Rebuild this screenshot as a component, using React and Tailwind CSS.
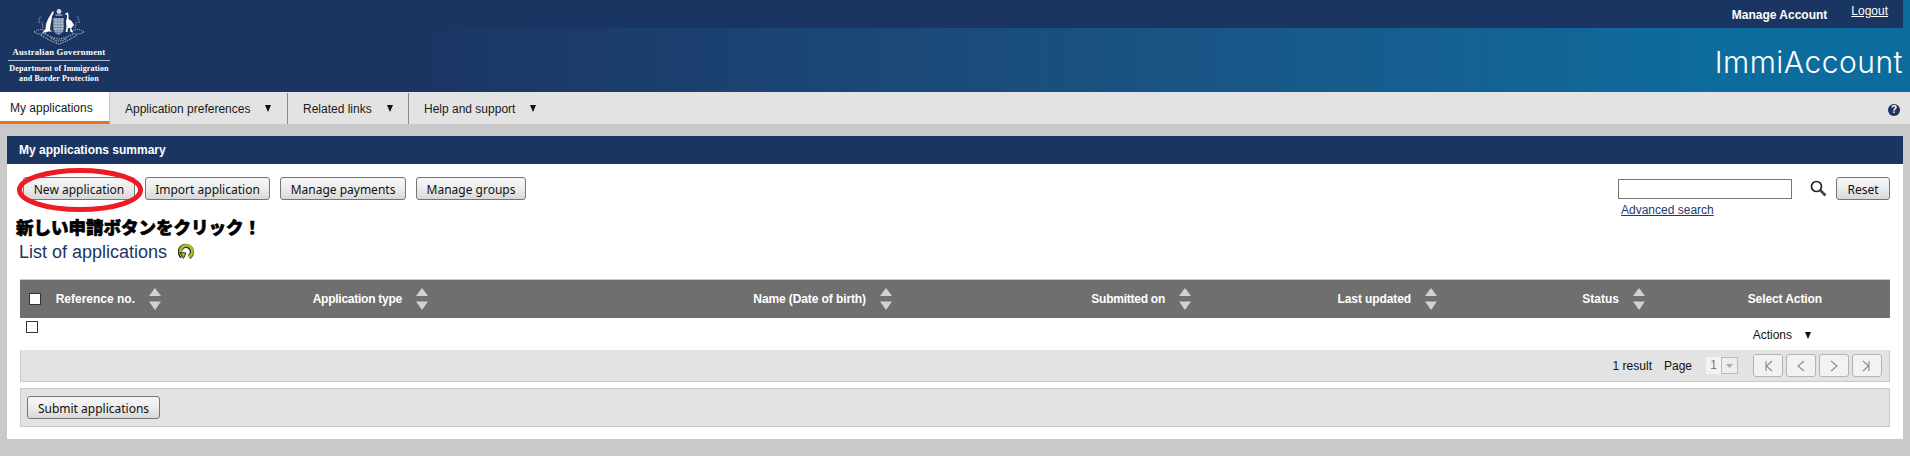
const sans = { fontFamily: '"Liberation Sans", Arial, sans-serif' }

function Emblem() {
  return (
    <svg width="52" height="37" viewBox="0 0 52 37" className="block" fill="none">
      {/* crest */}
      <circle cx="26" cy="3.5" r="2.4" fill="#fff" opacity="0.8" />
      <rect x="22.5" y="6.5" width="7" height="1.2" fill="#fff" opacity="0.6" />
      {/* kangaroo */}
      <path d="M19 4 L20.5 3 L20.5 6 L19 8 L18.5 12 L17.5 17 L17 22 L19.5 23.5 L16 23.5 L13.5 24 L9 25 L12.5 21 L13 16 L15.5 10 L17.5 7 Z" fill="#fff" />
      {/* emu */}
      <path d="M33 5 L35 4.5 L35.5 7 L35.5 11 L38.5 13 L41 17 L39 19.5 L38 20 L40 24 L37.5 24 L37 20 L35 20 L34.5 24 L32.5 24 L33.5 19 L33 13 L34 10 L34 7 L32 6.5 Z" fill="#fff" />
      {/* shield */}
      <path d="M20 10 H31 V20 Q31 25 25.5 27 Q20 25 20 20 Z" fill="#6e80a2" />
      <path d="M21 12 H30 M21 15 H30 M21 18 H30 M21 21 H30 M23 10 V25 M26 10 V26 M29 10 V24" stroke="#fff" strokeWidth="0.9" strokeDasharray="1.5 1" opacity="0.8" />
      {/* wattle */}
      <path d="M1 24 Q8 19 14 24 Q8 28 1 24 Z M51 24 Q44 19 38 24 Q44 28 51 24 Z" stroke="#fff" strokeWidth="1" strokeDasharray="1.2 1" opacity="0.7" />
      <path d="M6 15 Q6 10 8 8 M10 20 L9 14 M46 15 Q46 10 44 8 M42 20 L43 14" stroke="#fff" strokeWidth="1.2" strokeDasharray="1.5 0.8" opacity="0.45" />
      <path d="M8 27 Q17 33 26 36 Q35 33 44 27 M12 26 Q19 30 26 31 Q33 30 40 26 M18 30 Q22 33 26 33 Q30 33 34 30" stroke="#fff" strokeWidth="1.1" strokeDasharray="1.4 1" opacity="0.65" />
    </svg>
  )
}

function SiteHeader() {
  return (
    <header className="h-[92px] shrink-0 relative bg-linear-to-r from-[#1b3563] from-22% to-[#0d6c9e] to-90%">
      <div className="h-[28px] mr-[7px] bg-[#1b3563] flex justify-end text-white text-[12px]" style={sans}>
        <span className="font-bold mt-[6px] mr-[24px]">Manage Account</span>
        <a className="underline mt-[2px] mr-[15px]">Logout</a>
      </div>
      <div className="h-[64px] flex justify-end pr-[7px] pt-[16px]">
        <span className="text-white text-[30px] leading-[36px] font-light tracking-[0.5px]" style={{ fontFamily: 'Inter, sans-serif' }}>ImmiAccount</span>
      </div>
      {/* logo sits over the banner */}
      <div className="absolute left-0 top-0 w-[118px] h-[92px] flex flex-col items-center pt-[8px] text-white font-bold" style={{ fontFamily: '"Liberation Serif", serif' }}>
        <Emblem />
        <div className="text-[8.6px] leading-[11px] mt-[2px] tracking-[0.25px] whitespace-nowrap">Australian Government</div>
        <div className="w-[102px] h-px bg-[#a9b6cc] my-[2px]" />
        <div className="text-[8px] leading-[9.5px] mt-[1px] text-center tracking-[0.15px] whitespace-nowrap">
          Department of Immigration<br />and Border Protection
        </div>
      </div>
    </header>
  )
}

function Caret({ className = '' }) {
  return (
    <svg width="6" height="7" viewBox="0 0 6 7" className={className}>
      <path d="M0 0 H6 L3 7 Z" fill="#111" />
    </svg>
  )
}

function NavBar() {
  const tabs = [
    { label: 'Application preferences', w: 'w-[178px]' },
    { label: 'Related links', w: 'w-[121px]' },
    { label: 'Help and support', w: 'w-[150px]' },
  ]
  return (
    <nav className="h-[32px] shrink-0 bg-[#e3e3e3] flex items-stretch text-[12px] text-[#1a1a1a]" style={sans}>
      <div className="w-[110px] bg-white border-b-[3px] border-[#e8731f] border-r border-r-[#c9c9c9] pl-[10px] pt-[7px]">My applications</div>
      {tabs.map((t, i) => (
        <div key={t.label} className={`${t.w} flex items-center pl-[15px] mt-[1px] ${i < 2 ? 'border-r border-[#8a8a8a]' : ''}`}>
          {t.label}
          <Caret className="ml-[15px]" />
        </div>
      ))}
      <div className="ml-auto mr-[10px] mt-[12px] w-[12px] h-[12px] rounded-full bg-[#1b3563] text-white text-[10px] leading-[12px] font-bold text-center">?</div>
    </nav>
  )
}

function Btn({ children, className = '' }) {
  return (
    <button
      className={`h-[23px] pt-[2px] rounded-[3px] border border-[#767676] bg-linear-to-b from-[#f7f7f7] via-[#ececec] to-[#d8d8d8] text-[12px] text-[#111] leading-none ${className}`}
      style={{ fontFamily: '"Noto Sans", sans-serif' }}
    >
      {children}
    </button>
  )
}

function SortArrows() {
  return (
    <svg width="12" height="22" viewBox="0 0 12 22" className="ml-[14px] shrink-0">
      <path d="M6 0 L12 8 H0 Z M0 10 H12 M0 13.5 H12 L6 22 Z" fill="#d2d2d2" />
    </svg>
  )
}

function Check({ className = '' }) {
  return <span className={`block w-[12px] h-[12px] border border-[#333] bg-white ${className}`} />
}

function Toolbar() {
  return (
    <div className="relative h-[38px] flex justify-between pl-[3px]">
      <div className="flex gap-[10px] items-start">
        <Btn className="w-[112px]">New application</Btn>
        <Btn className="w-[125px]">Import application</Btn>
        <Btn className="w-[126px]">Manage payments</Btn>
        <Btn className="w-[110px]">Manage groups</Btn>
      </div>
      <div className="flex items-start">
        <div>
          <div className="w-[174px] h-[20px] mt-[2px] border border-[#777] bg-white" />
          <a className="block ml-[3px] mt-[4px] text-[12px] leading-[14px] underline text-[#1f3a6b]" style={sans}>Advanced search</a>
        </div>
        <svg width="17" height="17" viewBox="0 0 17 17" className="ml-[18px] mt-[3px]" fill="none">
          <circle cx="6.5" cy="6.5" r="5" stroke="#222" strokeWidth="1.7" />
          <path d="M10.5 10.5 L15.5 15.5" stroke="#444" strokeWidth="2.6" />
        </svg>
        <Btn className="w-[54px] ml-[9px]">Reset</Btn>
      </div>
      {/* red hand-drawn ring around the first button */}
      <svg width="130" height="48" viewBox="0 0 130 48" className="absolute left-[-5px] top-[-11px] pointer-events-none" fill="none">
        <ellipse cx="65" cy="24" rx="60.5" ry="19.5" stroke="#ed1c24" strokeWidth="5" />
      </svg>
    </div>
  )
}

function DataTable() {
  const cols = [
    { label: 'Reference no.', w: 'w-[123px]', t: '' },
    { label: 'Application type', w: 'w-[267px]', t: 'tracking-[-0.25px]' },
    { label: 'Name (Date of birth)', w: 'w-[464px]', t: 'tracking-[-0.1px]' },
    { label: 'Submitted on', w: 'w-[299px]', t: 'tracking-[-0.25px]' },
    { label: 'Last updated', w: 'w-[246px]', t: 'tracking-[-0.1px]' },
    { label: 'Status', w: 'w-[208px]', t: '' },
  ]
  return (
    <div className="text-[12px]" style={sans}>
      <div className="h-[39px] bg-[#6f6f6f] border-t border-[#c9c9c9] flex items-center text-white font-bold">
        <div className="w-[30px] pl-[9px]"><Check /></div>
        {cols.map((c) => (
          <div key={c.label} className={`${c.w} flex items-center justify-end pr-[12px]`}>
            <span className={c.t}>{c.label}</span>
            <SortArrows />
          </div>
        ))}
        <div className="flex-1 text-right pr-[68px] tracking-[-0.1px]">Select Action</div>
      </div>
      <div className="h-[32px] bg-white flex justify-between text-[#111]">
        <Check className="ml-[6px] mt-[3px]" />
        <div className="flex items-center pr-[79px] pt-[2px]">
          Actions
          <Caret className="ml-[13px]" />
        </div>
      </div>
      <div className="h-[32px] bg-[#e3e3e3] border-b border-x border-[#c9c9c9] flex items-center justify-end text-[#111] pr-[7px]">
        <span>1 result</span>
        <span className="ml-[12px]">Page</span>
        <div className="ml-[14px] flex h-[17px] text-[#777]">
          <span className="w-[15px] bg-[#f3f3f3] text-center leading-[17px]">1</span>
          <span className="w-[17px] border border-[#bcbcbc] bg-[#ededed] flex items-center justify-center">
            <svg width="7" height="4" viewBox="0 0 7 4"><path d="M0 0 H7 L3.5 4 Z" fill="#aaa" /></svg>
          </span>
        </div>
        <div className="ml-[15px] flex gap-[3px]">
          {['M4 1 V11 M10 1 L4.5 6 L10 11', 'M9 1 L3 6 L9 11', 'M3 1 L9 6 L3 11', 'M8 1 V11 M2 1 L7.5 6 L2 11'].map((d) => (
            <span key={d} className="w-[30px] h-[23px] rounded-[3px] border border-[#b4b4b4] bg-[#f2f2f2] flex items-center justify-center">
              <svg width="12" height="12" viewBox="0 0 12 12" fill="none"><path d={d} stroke="#8a8a8a" strokeWidth="1.1" /></svg>
            </span>
          ))}
        </div>
      </div>
    </div>
  )
}

export default function App() {
  return (
    <div className="w-[1910px] h-[456px] overflow-hidden bg-[#c9c9c9] flex flex-col">
      <SiteHeader />
      <NavBar />
      <main className="h-[327px] shrink-0 pl-[7px] pr-[7px] pt-[12px]">
        <div className="h-[28px] bg-[#1b3563] text-white text-[12px] font-bold leading-[28px] pl-[12px]" style={sans}>
          My applications summary
        </div>
        <div className="h-[275px] bg-white px-[13px] pt-[13px]">
          <Toolbar />
          <div className="h-[19px] mt-[2px] -ml-[4px] text-[17.5px] leading-[19px] font-black text-black whitespace-nowrap [-webkit-text-stroke:0.6px_black]" style={{ fontFamily: '"Noto Sans CJK JP", sans-serif' }}>
            新しい申請ボタンをクリック！
          </div>
          <div className="flex items-center h-[24px] -ml-[1px] mt-[4px]">
            <span className="text-[18px] text-[#1b3563]" style={sans}>List of applications</span>
            <svg width="17" height="17" viewBox="0 0 17 17" className="ml-[11px] mb-[2px]" fill="none">
              <path d="M4.2 13.6 A6 6 0 1 1 11 14" stroke="#33331f" strokeWidth="4.4" />
              <path d="M4.6 13 A6 6 0 1 1 10.6 13.9" stroke="#a9bf2c" strokeWidth="2.8" />
              <path d="M2 9.5 L8 10 L5.5 15.5 Z" fill="#a9bf2c" stroke="#33331f" strokeWidth="1" />
            </svg>
          </div>
          <div className="mt-[15px]">
            <DataTable />
          </div>
          <div className="mt-[6px] h-[39px] bg-[#e3e3e3] border border-[#c9c9c9] flex items-center pl-[6px]">
            <Btn className="w-[133px]">Submit applications</Btn>
          </div>
        </div>
      </main>
      <div className="flex-1 bg-[#e3e3e3] mt-[12px]" />
    </div>
  )
}
